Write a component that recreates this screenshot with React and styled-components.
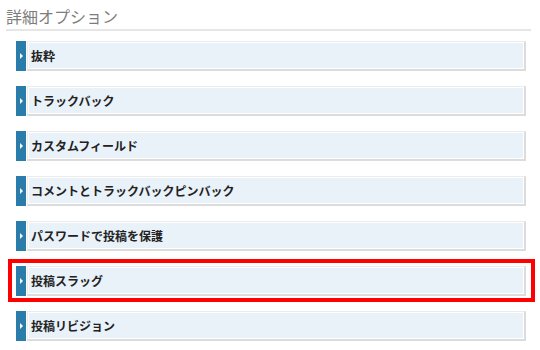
import React from 'react';
import styled, { createGlobalStyle } from 'styled-components';

const GlobalStyle = createGlobalStyle`
  html, body {
    margin: 0;
    padding: 0;
    background: #fff;
  }
  body {
    font-family: 'Noto Sans CJK JP', 'Noto Sans', sans-serif;
  }
`;

const Page = styled.div`
  width: 540px;
  height: 350px;
  overflow: hidden;
  background: #fff;
`;

const Heading = styled.h2`
  margin: 0 9px 0 6px;
  padding: 6px 0 2px;
  font-size: 16px;
  line-height: 21px;
  font-weight: normal;
  color: #7d7d7d;
  border-bottom: 2px solid #e6e6e6;
`;

const List = styled.div`
  display: flex;
  flex-direction: column;
  gap: 15px;
  padding: 10px 14px 0 16px;
`;

const Row = styled.div`
  position: relative;
  display: flex;
  height: 30px;

  ${(p) =>
    p.$highlight &&
    `
    &::after {
      content: '';
      position: absolute;
      top: -7px;
      left: -8px;
      right: -9px;
      bottom: -6px;
      border: 4px solid #f00;
      pointer-events: none;
    }
  `}
`;

const Handle = styled.div`
  width: 10px;
  margin-right: 1px;
  background: #2a7cab;
  display: flex;
  align-items: center;
  justify-content: center;

  &::before {
    content: '';
    width: 0;
    height: 0;
    border-top: 3px solid transparent;
    border-bottom: 3px solid transparent;
    border-left: 3px solid #fff;
    margin-left: 1px;
  }
`;

const Box = styled.div`
  flex: 1;
  display: flex;
  align-items: center;
  box-sizing: border-box;
  padding-left: 3px;
  background: #e9f1f9;
  border-top: 1px solid #ececec;
  border-left: 1px solid #ececec;
  border-right: 2px solid #dcdcdc;
  border-bottom: 2px solid #dcdcdc;
  box-shadow: inset 1px 1px 0 #fff, inset -1px -1px 0 #fff;
  font-size: 12px;
  font-weight: bold;
  color: #222;
`;

const items = [
  '抜粋',
  'トラックバック',
  'カスタムフィールド',
  'コメントとトラックバックピンバック',
  'パスワードで投稿を保護',
  '投稿スラッグ',
  '投稿リビジョン',
];

export default function App() {
  return (
    <Page>
      <GlobalStyle />
      <Heading>詳細オプション</Heading>
      <List>
        {items.map((label) => (
          <Row key={label} $highlight={label === '投稿スラッグ'}>
            <Handle />
            <Box>{label}</Box>
          </Row>
        ))}
      </List>
    </Page>
  );
}
